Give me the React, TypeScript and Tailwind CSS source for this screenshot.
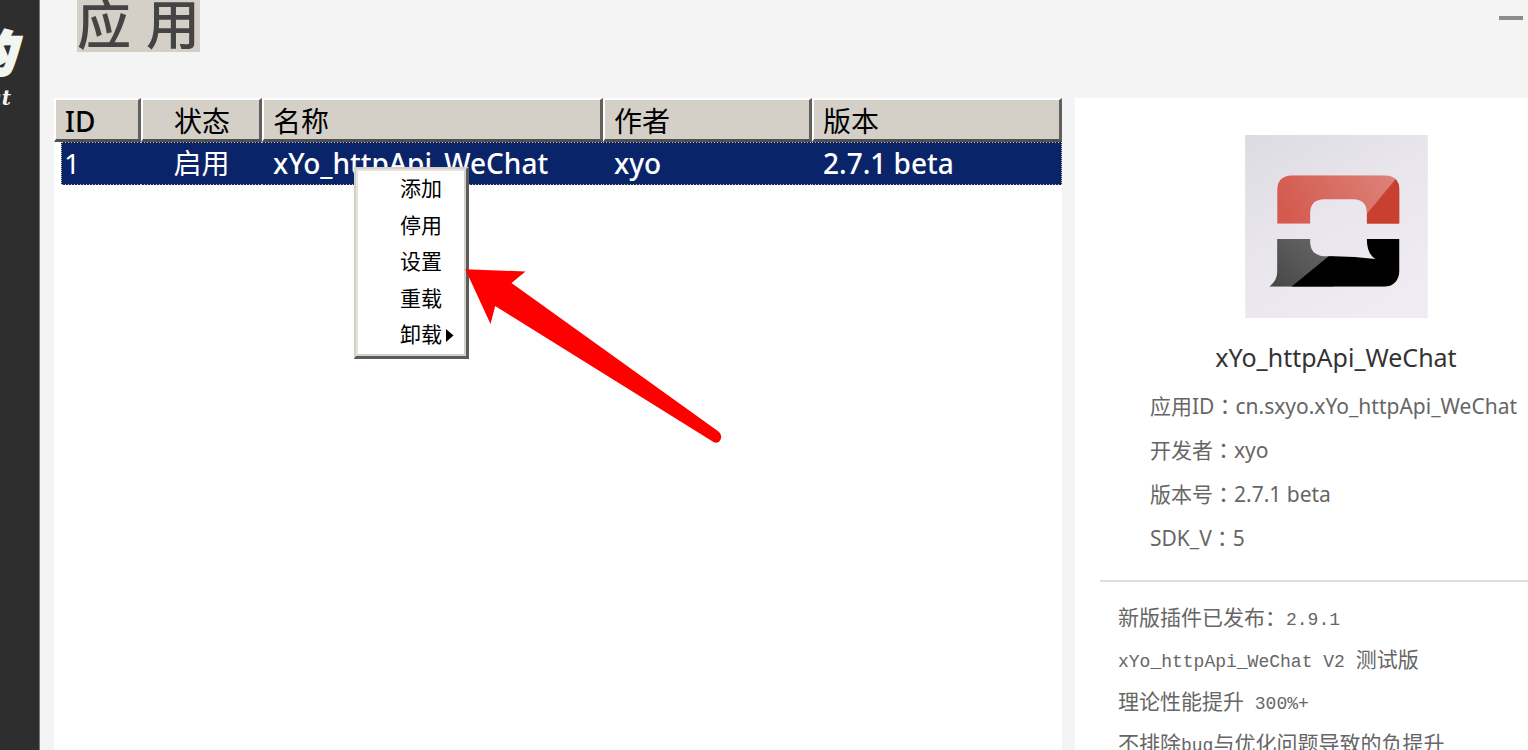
import React from "react";

const columns = ["ID", "状态", "名称", "作者", "版本"];
const plugin = ["1", "启用", "xYo_httpApi_WeChat", "xyo", "2.7.1 beta"];
const menuItems = ["添加", "停用", "设置", "重载", "卸载"];

const details = [
  ["应用ID", "cn.sxyo.xYo_httpApi_WeChat"],
  ["开发者", "xyo"],
  ["版本号", "2.7.1 beta"],
  ["SDK_V", "5"],
];

const sans = "font-['Noto_Sans','Noto_Sans_CJK_SC',sans-serif]";

function Sidebar() {
  return (
    <aside className="flex w-10 shrink-0 flex-col items-end overflow-hidden border-r border-[#777] bg-[#2e2e2e] pr-6 pt-[26px] text-[#f1f6f1]">
      <span className="text-[48px] font-black italic leading-[54px] [-webkit-text-stroke:3px_#f1f6f1]">的</span>
      <span className="pr-1 font-['DejaVu_Serif',serif] text-[20px] font-bold italic leading-9">Chat</span>
    </aside>
  );
}

function PluginTable() {
  return (
    <table className="w-full table-fixed border-collapse text-left text-[28px] leading-[42px]">
      <colgroup>
        <col className="w-[87px]" />
        <col className="w-[121px]" />
        <col className="w-[341px]" />
        <col className="w-[209px]" />
        <col />
      </colgroup>
      <thead>
        <tr>
          {columns.map((name, i) => (
            <th key={name} scope="col" className="p-0 font-normal">
              <div
                className={`h-11 border-b-[3px] border-l-2 border-r-[3px] border-t-2 border-b-[#505050] border-l-white border-r-[#606060] border-t-white bg-[#d4d0c8] text-black ${
                  i === 1 ? "pl-0.5 text-center" : i === 0 ? "pl-[9px] font-medium" : "pl-[9px]"
                }`}
              >
                {name}
              </div>
            </th>
          ))}
        </tr>
      </thead>
      <tbody>
        <tr>
          {plugin.map((value, i) => (
            <td key={value} className={i === 0 ? "p-0 pl-[7px]" : "p-0"}>
              <div
                className={`h-[43px] [background:repeating-linear-gradient(90deg,#d9c795_0_1px,#0a246a_1px_3px)_top/100%_1px_no-repeat,repeating-linear-gradient(90deg,#d9c795_0_1px,#0a246a_1px_3px)_bottom/100%_1px_no-repeat,#0a246a] text-white ${
                  i === 0 ? "border-l border-dotted border-[#d9c795] pl-0.5" : i === 1 ? "text-center" : "pl-[11px] font-medium"
                } ${i === 4 ? "border-r border-dotted border-[#d9c795]" : ""}`}
              >
                {value}
              </div>
            </td>
          ))}
        </tr>
      </tbody>
    </table>
  );
}

function ContextMenu() {
  return (
    <div
      role="menu"
      className="absolute left-[300px] top-[69px] w-[115px] border-b-[3px] border-l-2 border-r-[3px] border-t-2 border-b-[#5c5c5c] border-l-[#d4d0c8] border-r-[#5c5c5c] border-t-[#d4d0c8]"
    >
      <div className="flex h-[187px] flex-col justify-between border-2 border-b-[#d4d0c8] border-l-[#e6e3dd] border-r-[#d4d0c8] border-t-[#e6e3dd] bg-white pb-px">
        {menuItems.map((item) => (
          <button key={item} type="button" role="menuitem" className="flex h-9 items-center gap-1 pl-[42px] text-[21px] text-black">
            {item}
            {item === "卸载" && (
              <svg width="8" height="13" viewBox="0 0 8 13" aria-hidden="true">
                <path d="M0 0 7.5 6.5 0 13Z" />
              </svg>
            )}
          </button>
        ))}
      </div>
    </div>
  );
}

function Arrow() {
  return (
    <svg className="absolute left-[411px] top-[170px]" width="260" height="178" viewBox="465 268 260 178" aria-hidden="true">
      <path
        fill="#ff0000"
        d="M465.3 269.2 525.5 271.5 511.5 283 718.5 431.5C721.5 434 722 438 720 440.5C718.5 443 716 443.2 713.5 442L495.2 306 490.5 324Z"
      />
    </svg>
  );
}

function PluginIcon() {
  return (
    <svg width="183" height="183" viewBox="46 43 548 549" role="img" aria-label="xYo">
      <defs>
        <linearGradient id="tile" x1="0" y1="0" x2="0.6" y2="1">
          <stop offset="0" stopColor="#dddbe2" />
          <stop offset="0.5" stopColor="#e8e5ec" />
          <stop offset="1" stopColor="#f0ebf3" />
        </linearGradient>
        <linearGradient id="red" x1="0" y1="0.2" x2="1" y2="0">
          <stop offset="0" stopColor="#d4594e" />
          <stop offset="1" stopColor="#dd867d" />
        </linearGradient>
        <linearGradient id="gray" x1="0" y1="1" x2="1" y2="0">
          <stop offset="0" stopColor="#444" />
          <stop offset="1" stopColor="#6a6a6a" />
        </linearGradient>
        <clipPath id="top">
          <path d="M142 309V210Q142 164 190 164H462Q509 164 509 210V309H411V278Q411 236 370 236H284Q241 236 241 278V309Z" />
        </clipPath>
        <clipPath id="bottom">
          <path d="M142 355H241V368Q243 407 290 407Q360 405 437 415Q411 400 411 355H509V450Q506 495 464 498H118Q142 480 142 455Z" />
        </clipPath>
      </defs>
      <rect x="46" y="43" width="548" height="549" fill="url(#tile)" />
      <g clipPath="url(#top)">
        <rect x="110" y="155" width="410" height="160" fill="url(#red)" />
        <path d="M495 178 411 280V320H520V150Z" fill="#c84030" />
      </g>
      <g clipPath="url(#bottom)">
        <rect x="110" y="350" width="200" height="155" fill="url(#gray)" />
        <path d="M185 498 300 404V340H520V505H185Z" fill="#000" />
      </g>
    </svg>
  );
}

function Mono({ children }: { children: React.ReactNode }) {
  return <span className="font-['Liberation_Mono',monospace] text-[18px] leading-none">{children}</span>;
}

function DetailPanel() {
  return (
    <section className="w-[453px] shrink-0 overflow-hidden bg-white pt-[37px]">
      <div className="flex flex-col items-center pl-[69px]">
        <PluginIcon />
        <h2 className="mt-5 text-[25px] leading-[38px] text-[#333]">xYo_httpApi_WeChat</h2>
      </div>
      <dl className="mt-2 pl-[75px] text-[21px] leading-[44px] text-[#666]">
        {details.map(([label, value]) => (
          <div key={label} className="flex whitespace-nowrap">
            <dt>
              {label}
              <span className="font-['Noto_Sans_CJK_TC',sans-serif] leading-none">：</span>
            </dt>
            <dd>{value}</dd>
          </div>
        ))}
      </dl>
      <hr className="ml-[25px] mt-5 border-t-2 border-[#dfdfdf]" />
      <div className="whitespace-pre pl-[43px] pt-3.5 text-[21px] leading-[42px] text-[#666]">
        <p>新版插件已发布：<Mono>2.9.1</Mono></p>
        <p><Mono>xYo_httpApi_WeChat V2 </Mono>测试版</p>
        <p>理论性能提升<Mono> 300%+</Mono></p>
        <p>不排除<Mono>bug</Mono>与优化问题导致的负提升</p>
      </div>
    </section>
  );
}

export default function App() {
  return (
    <div className={`flex h-screen overflow-hidden bg-[#f4f4f4] ${sans}`}>
      <Sidebar />
      <main className="flex min-w-0 flex-1 flex-col pl-[14px]">
        <header className="flex h-[98px] shrink-0 items-start justify-between pl-[23px]">
          <h1 className="flex h-[52px] items-center overflow-hidden whitespace-pre bg-[#d4d0c8] font-['Liberation_Sans','Noto_Sans_CJK_SC',sans-serif] text-[54px] font-medium leading-[60px] text-[#444]">
            应 用
          </h1>
          <button type="button" aria-label="最小化" className="flex h-9 w-[29px] items-center">
            <span className="h-1 w-6 bg-[#8c8c8c]" />
          </button>
        </header>
        <div className="flex min-h-0 flex-1 gap-[13px]">
          <section className="relative min-w-0 flex-1 bg-white">
            <PluginTable />
            <ContextMenu />
            <Arrow />
          </section>
          <DetailPanel />
        </div>
      </main>
    </div>
  );
}
